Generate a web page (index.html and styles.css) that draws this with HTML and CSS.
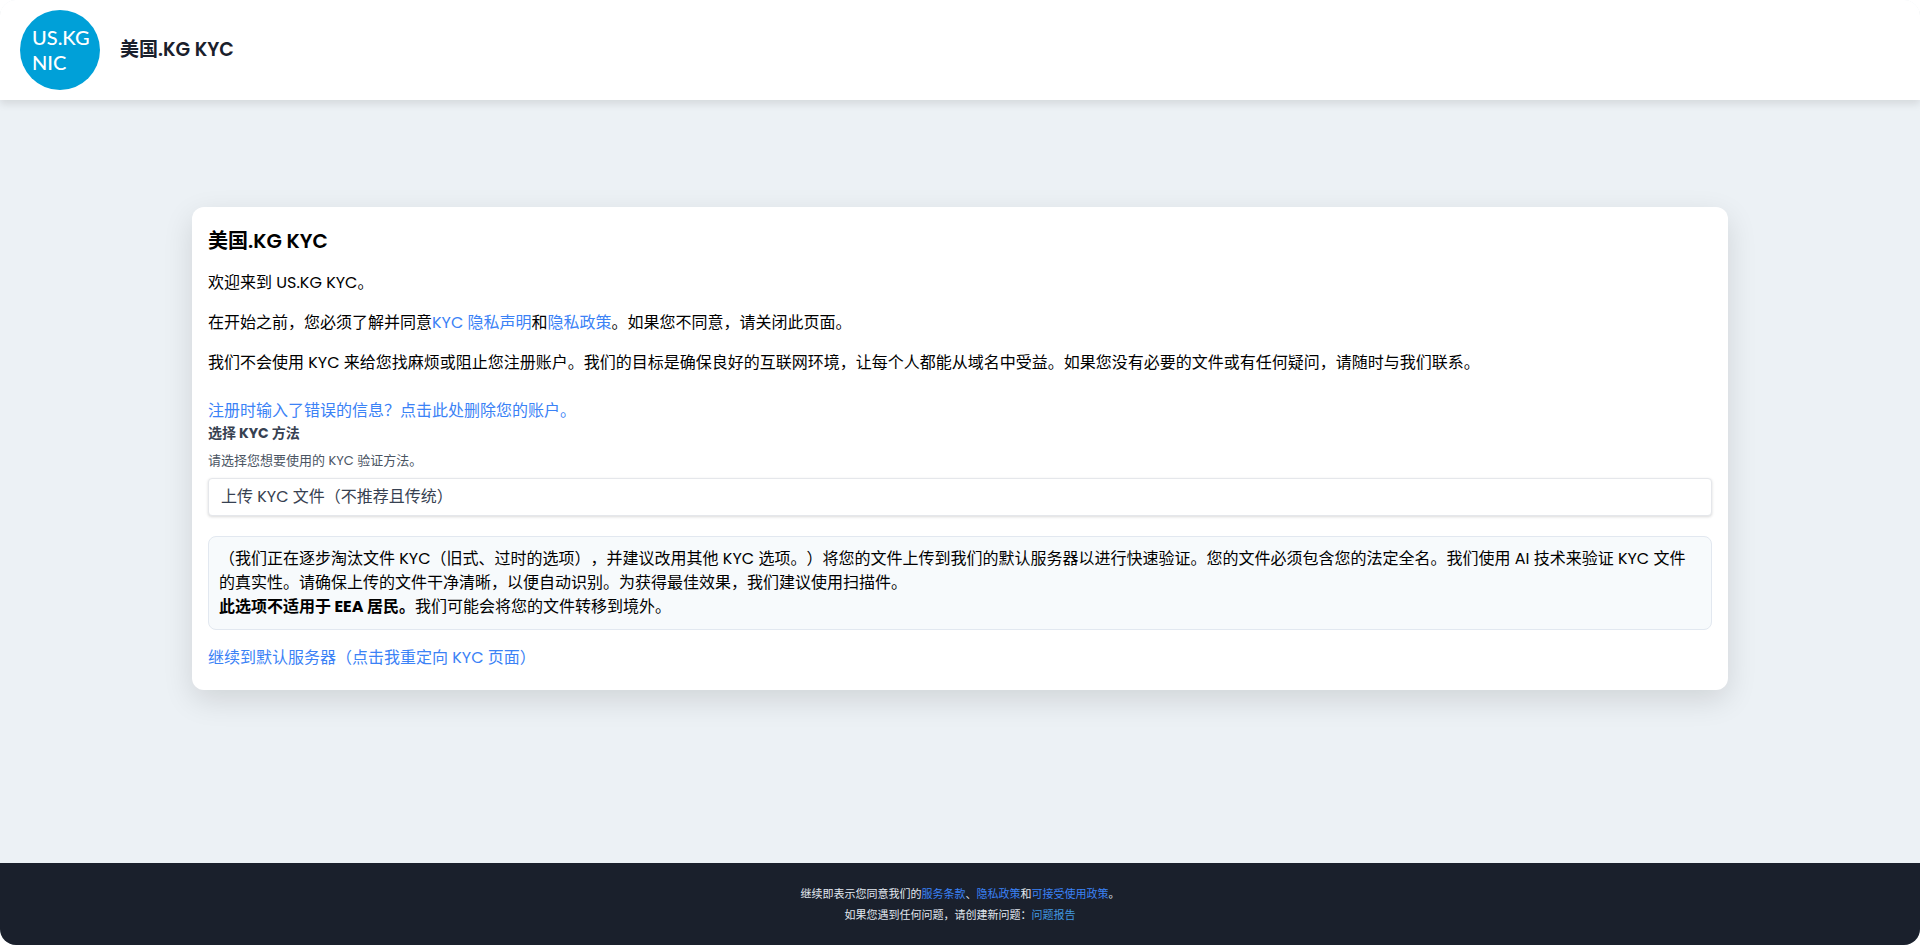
FILE: index.html
```
<!DOCTYPE html>
<html lang="zh-CN">
<head>
<meta charset="utf-8">
<title>美国.KG KYC</title>
<link rel="stylesheet" href="styles.css">
</head>
<body>
<div class="page">
  <header class="header">
    <svg class="logo" viewBox="0 0 80 80" role="img" aria-label="US.KG NIC">
      <circle cx="40" cy="40" r="40" fill="#00a0d8"/>
      <text class="logo-text" x="12" y="35">US.KG</text>
      <text class="logo-text" x="12" y="60">NIC</text>
    </svg>
    <span class="brand">美国.KG KYC</span>
  </header>
  <main class="main">
    <section class="card">
      <h1 class="title">美国.KG KYC</h1>
      <p class="text">欢迎来到 US.KG KYC。</p>
      <p class="text">在开始之前，您必须了解并同意<a class="link" href="#">KYC 隐私声明</a>和<a class="link" href="#">隐私政策</a>。如果您不同意，请关闭此页面。</p>
      <p class="text">我们不会使用 KYC 来给您找麻烦或阻止您注册账户。我们的目标是确保良好的互联网环境，让每个人都能从域名中受益。如果您没有必要的文件或有任何疑问，请随时与我们联系。</p>
      <a class="link link-block delete-link" href="#">注册时输入了错误的信息？点击此处删除您的账户。</a>
      <form class="form">
        <label class="label" for="method">选择 KYC 方法</label>
        <p class="hint" id="method-hint">请选择您想要使用的 KYC 验证方法。</p>
        <select class="select" id="method" aria-describedby="method-hint">
          <option>上传 KYC 文件（不推荐且传统）</option>
        </select>
      </form>
      <div class="notice">（我们正在逐步淘汰文件 KYC（旧式、过时的选项），并建议改用其他 KYC 选项。）将您的文件上传到我们的默认服务器以进行快速验证。您的文件必须包含您的法定全名。我们使用 AI 技术来验证 KYC 文件的真实性。请确保上传的文件干净清晰，以便自动识别。为获得最佳效果，我们建议使用扫描件。<br><strong>此选项不适用于 EEA 居民。</strong>我们可能会将您的文件转移到境外。</div>
      <a class="link link-block" href="#">继续到默认服务器（点击我重定向 KYC 页面）</a>
    </section>
  </main>
  <footer class="footer">
    <p class="footer-line">继续即表示您同意我们的<a class="footer-link" href="#">服务条款</a>、<a class="footer-link" href="#">隐私政策</a>和<a class="footer-link" href="#">可接受使用政策</a>。</p>
    <p class="footer-line">如果您遇到任何问题，请创建新问题：<a class="footer-link report" href="#">问题报告</a></p>
  </footer>
</div>
</body>
</html>
```
FILE: styles.css
```
* {
  box-sizing: border-box;
}

body {
  margin: 0;
  background: #fff;
  color: #000;
  font: 400 16px/24px Poppins, Inter, "Noto Sans CJK SC", sans-serif;
  text-spacing-trim: space-all;
}

h1, p {
  margin: 0;
}

a {
  text-decoration: none;
}

.page {
  display: flex;
  flex-direction: column;
  min-height: 100vh;
  overflow: hidden;
  border-radius: 16px;
  background: #ecf1f5;
}

.header {
  display: flex;
  align-items: center;
  gap: 20px;
  padding: 10px 20px;
  background: #fff;
  box-shadow: 0 4px 8px rgba(0, 0, 0, 0.1);
}

.logo {
  width: 80px;
  height: 80px;
}

.logo-text {
  fill: #fff;
  font: 500 20px Lato, sans-serif;
}

.brand {
  color: #1a202c;
  font-size: 19px;
  font-weight: 600;
}

.main {
  display: flex;
  flex: 1;
  align-items: center;
  justify-content: center;
  padding-bottom: 66px;
}

.card {
  width: 80%;
  padding: 20px 16px;
  border-radius: 12px;
  background: #fff;
  box-shadow: 0 10px 30px rgba(0, 0, 0, 0.12);
}

.title {
  margin-bottom: 16px;
  font-size: 20px;
  font-weight: 600;
  line-height: 28px;
}

.text {
  margin-bottom: 16px;
}

.link {
  color: #3b82f6;
}

.link-block {
  display: block;
}

.delete-link {
  margin-top: 24px;
}

.label {
  display: block;
  color: #374151;
  font-size: 14px;
  font-weight: 700;
  line-height: 20px;
}

.hint {
  margin: 8px 0 7px;
  color: #4b5563;
  font-size: 13px;
  line-height: 20px;
}

.select {
  display: block;
  width: 100%;
  height: 38px;
  padding: 0 12px;
  appearance: none;
  border: 1px solid #e5e7eb;
  border-radius: 4px;
  background: #fff;
  box-shadow: 0 1px 3px rgba(0, 0, 0, 0.15);
  color: #374151;
  font: inherit;
}

.notice {
  margin: 20px 0 16px;
  padding: 10px;
  border: 1px solid #e2e8f0;
  border-radius: 8px;
  background: #f7fafc;
}

.notice strong {
  font-weight: 700;
}

.footer {
  padding: 21px 20px 19px;
  background: #1a202c;
  color: #e2e8f0;
  font-size: 11px;
  line-height: 21px;
  text-align: center;
}

.footer-link {
  color: #3b82f6;
}

.report {
  color: #4299e1;
}
```
